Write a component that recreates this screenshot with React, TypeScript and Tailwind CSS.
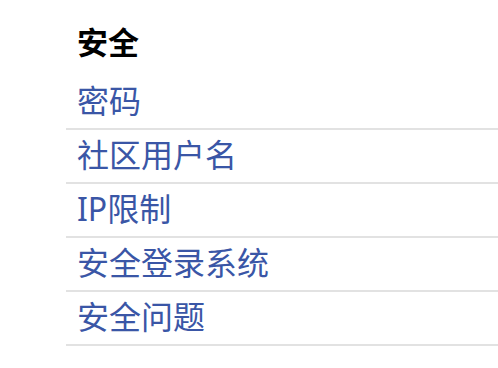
const ITEMS = ['密码', '社区用户名', 'IP限制', '安全登录系统', '安全问题'];

export default function App() {
  return (
    <div
      className="w-[498px] h-[368px] bg-white pl-[66px]"
      style={{ fontFamily: '"Noto Sans", "Noto Sans CJK SC", sans-serif' }}
    >
      <h2 className="h-[76px] pl-[11px] pt-[22px] text-[31px] leading-[40px] font-bold text-black">安全</h2>
      <ul>
        {ITEMS.map((item) => (
          <li key={item} className="h-[54px] border-b-2 border-[#e2e2e2] pl-[11px] pb-[3px] flex items-center">
            <a href="#" className="text-[32px] leading-[40px] text-[#3a56a6]">
              {item}
            </a>
          </li>
        ))}
      </ul>
    </div>
  );
}
